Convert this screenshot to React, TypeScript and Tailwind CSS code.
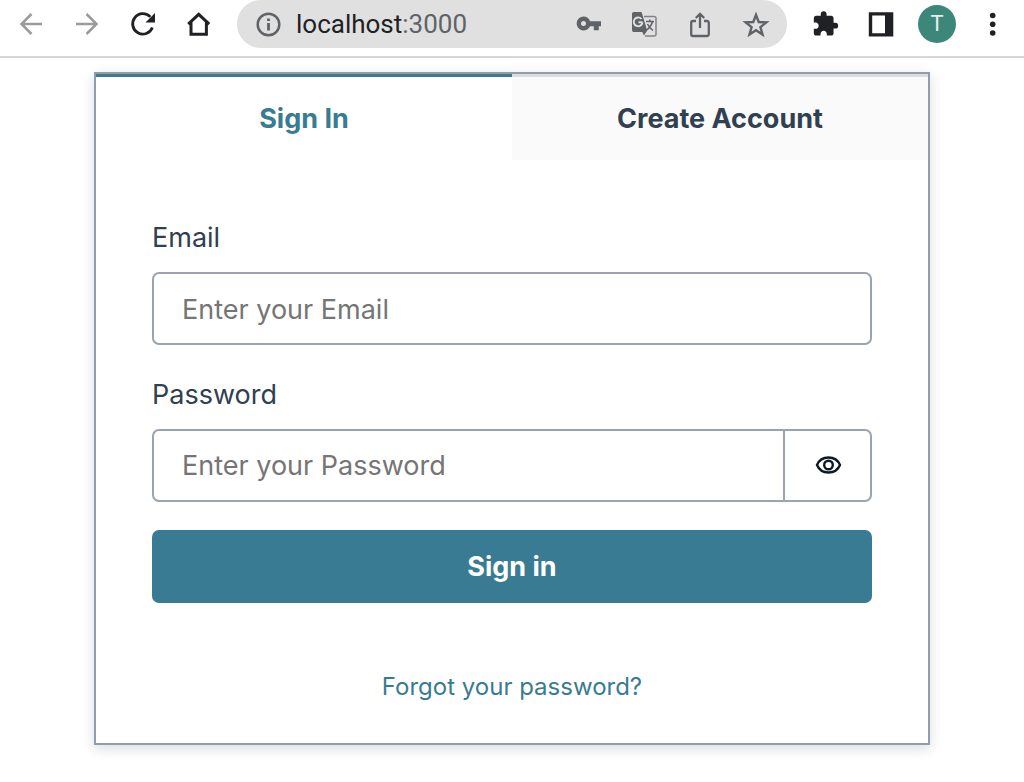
import React, { useState } from "react";

type IconProps = {
    children: React.ReactNode;
}

const Icon:React.FC<IconProps> = ({ children })=>{
    return (
        <svg className="size-8 shrink-0" viewBox="0 0 32 32" fill="none" aria-hidden="true">{children}</svg>
    )
}

const Toolbar:React.FC = ()=>{
    return (
        <header className="flex w-full items-center gap-[22px] border-b-2 border-[#d6d6d6] bg-white px-[15px] pb-2 text-[#202124]">
            <nav className="flex items-center gap-6">
                <button type="button" aria-label="Back" className="text-[#9b9b9b]">
                    <Icon>
                        <path d="M27 16H6.500M16.500 6 6.500 16l10 10" stroke="currentColor" strokeWidth="2.500" />
                    </Icon>
                </button>
                <button type="button" aria-label="Forward" className="text-[#9b9b9b]">
                    <Icon>
                        <path d="M5 16h20.500M15.500 6l10 10-10 10" stroke="currentColor" strokeWidth="2.500" />
                    </Icon>
                </button>
                <button type="button" aria-label="Reload">
                    <Icon>
                        <path d="M25.400 19.600A10.200 10.200 0 1 1 23.300 8.900" stroke="currentColor" strokeWidth="2.800" />
                        <path d="M28 5v9.500h-9.500z" fill="currentColor" />
                    </Icon>
                </button>
                <button type="button" aria-label="Home">
                    <Icon>
                        <path d="M5.200 16.200 15.700 6.400l10.500 9.800M8 14.500v11.700h15.400V14.500" stroke="currentColor" strokeWidth="3" />
                    </Icon>
                </button>
            </nav>
            <div className="flex h-12 min-w-0 grow items-center rounded-full bg-[#e0e0e0] px-[15px] text-[#5f6368]">
                <Icon>
                    <circle cx="16.500" cy="16.500" r="10.800" stroke="currentColor" strokeWidth="2.500" />
                    <path d="M16.500 15v7.500M16.500 10.500V13" stroke="currentColor" strokeWidth="2.800" />
                </Icon>
                <p className="min-w-0 grow truncate pl-3 font-['Roboto',sans-serif] text-[26px] leading-8"><span className="text-[#202124]">localhost</span>:3000</p>
                <div className="flex items-center gap-6">
                    <button type="button" aria-label="Saved passwords">
                        <Icon>
                            <path fillRule="evenodd" d="M11.500 8.500a7 7 0 0 1 6.600 4.700H29v5h-2.200v4h-5v-4h-3.700A7 7 0 1 1 11.500 8.500Zm0 4.500a2.500 2.500 0 1 0 0 5 2.500 2.500 0 0 0 0-5Z" fill="currentColor" />
                        </Icon>
                    </button>
                    <button type="button" aria-label="Translate this page">
                        <Icon>
                            <path d="M16 8.500h10.500a1.500 1.500 0 0 1 1.500 1.500v16.500a1.500 1.500 0 0 1-1.500 1.500H17" stroke="currentColor" strokeOpacity=".75" strokeWidth="1.500" />
                            <path d="M5.800 4h7.700l5.700 18.500L16 27.500l-1.800-3.500H5.800A1.800 1.800 0 0 1 4 22.200V5.800C4 4.800 4.800 4 5.800 4Z" fill="currentColor" />
                            <path d="M14.500 14.300h-4M13.500 11a4.400 4.400 0 1 0 1 3.300" stroke="#e0e0e0" strokeWidth="1.900" />
                            <path d="M18 13.500h8M21.800 11.500v2M24.500 13.500c-.8 4-3.300 6.500-5.800 8.500M19.500 16c1.300 3 3.500 5 5.500 6.500" stroke="currentColor" strokeWidth="1.500" />
                        </Icon>
                    </button>
                    <button type="button" aria-label="Share">
                        <Icon>
                            <path d="M12 13H9a1.800 1.800 0 0 0-1.800 1.800v11.400A1.800 1.800 0 0 0 9 28h14a1.800 1.800 0 0 0 1.800-1.800V14.800A1.800 1.800 0 0 0 23 13h-3M16 20V6M11.800 10 16 5.800l4.200 4.200" stroke="currentColor" strokeWidth="2.300" />
                        </Icon>
                    </button>
                    <button type="button" aria-label="Bookmark this tab">
                        <Icon>
                            <path d="m16 6.800 2.700 7.200 7.700.3-6 4.800 2.100 7.400-6.500-4.300-6.500 4.300 2.100-7.400-6-4.800 7.700-.3z" stroke="currentColor" strokeWidth="2.400" />
                        </Icon>
                    </button>
                </div>
            </div>
            <div className="flex items-center gap-6">
                <button type="button" aria-label="Extensions">
                    <Icon>
                        <g transform="translate(2.500 2) scale(1.160)">
                            <path d="M20.500 11H19V7c0-1.100-.9-2-2-2h-4V3.500a2.500 2.500 0 0 0-5 0V5H4c-1.100 0-1.990.9-1.990 2v3.800H3.500c1.490 0 2.700 1.210 2.700 2.700s-1.210 2.700-2.700 2.700H2V20c0 1.100.9 2 2 2h3.800v-1.500c0-1.490 1.210-2.700 2.700-2.700s2.700 1.210 2.700 2.700V22H17c1.100 0 2-.9 2-2v-4h1.500a2.500 2.500 0 0 0 0-5z" fill="currentColor" />
                        </g>
                    </Icon>
                </button>
                <button type="button" aria-label="Side panel">
                    <Icon>
                        <path fillRule="evenodd" d="M3.800 4.200h24.500v24.300H3.800zM7.200 7.400v17.900H20V7.400z" fill="currentColor" />
                    </Icon>
                </button>
                <button type="button" aria-label="Profile" className="-mx-[3px] flex size-[38px] items-center justify-center rounded-full bg-[#3c8779] font-['Roboto',sans-serif] text-[22px] leading-8 text-[#e4efed]">T</button>
                <button type="button" aria-label="Menu">
                    <Icon>
                        <circle cx="15.700" cy="7.500" r="2.800" fill="currentColor" />
                        <circle cx="15.700" cy="16.300" r="2.800" fill="currentColor" />
                        <circle cx="15.700" cy="25" r="2.800" fill="currentColor" />
                    </Icon>
                </button>
            </div>
        </header>
    )
}

const SignInForm:React.FC = ()=>{
    const [visible, setVisible] = useState(false);
    return (
        <form className="flex flex-col gap-7 px-14 pb-14 pt-[56px]" onSubmit={(e)=> e.preventDefault()}>
            <div className="flex flex-col gap-3">
                <label htmlFor="email" className="leading-[44px]">Email</label>
                <input id="email" type="email" placeholder="Enter your Email" className="h-[73px] w-full rounded-[7px] border-2 border-[#9aa3af] px-7 pt-px placeholder:text-[#757575]" />
            </div>
            <div className="flex flex-col gap-3">
                <label htmlFor="password" className="leading-[44px]">Password</label>
                <div className="flex h-[73px]">
                    <input id="password" type={visible ? "text" : "password"} placeholder="Enter your Password" className="min-w-0 grow rounded-l-[7px] border-2 border-[#9aa3af] px-7 pt-px placeholder:text-[#757575]" />
                    <button type="button" aria-label="Show password" onClick={()=> setVisible(!visible)} className="flex w-[87px] shrink-0 items-center justify-center rounded-r-[7px] border-2 border-l-0 border-[#9aa3af] text-[#0d1a26]">
                        <Icon>
                            <path d="M5 15C7 10.200 11.500 7.500 16.500 7.500S26 10.200 28 15C26 19.800 21.500 22.500 16.500 22.500S7 19.800 5 15Z" stroke="currentColor" strokeWidth="2.400" />
                            <circle cx="16.500" cy="15" r="4.300" stroke="currentColor" strokeWidth="2.400" />
                        </Icon>
                    </button>
                </div>
            </div>
            <button type="submit" className="h-[73px] w-full rounded-[7px] bg-[#387b92] pt-px font-bold text-white">Sign in</button>
        </form>
    )
}

const App:React.FC = ()=>{
    return (
        <div className="flex w-full flex-col bg-white font-['Inter',sans-serif]">
            <Toolbar></Toolbar>
            <main className="flex w-full justify-center pb-9 pt-[14px]">
                <div className="flex w-full max-w-[836px] flex-col border-2 border-[#939da9] bg-white text-[27px] text-[#304050] shadow-[0_4px_12px_rgba(13,26,38,0.15)]">
                    <div role="tablist" className="grid grid-cols-2 font-bold">
                        <button type="button" role="tab" aria-selected="true" className="h-[86px] border-t-[3px] border-[#387b92] pt-[2px] text-[#387b92]">Sign In</button>
                        <button type="button" role="tab" aria-selected="false" className="h-[86px] border-t-[3px] border-[#dcdee0] bg-[#fafafa] pt-[2px]">Create Account</button>
                    </div>
                    <SignInForm></SignInForm>
                    <div className="flex justify-center pb-7">
                        <a href="#forgot" className="text-2xl leading-[56px] text-[#387b92]">Forgot your password?</a>
                    </div>
                </div>
            </main>
        </div>
    )
}

export default App;
